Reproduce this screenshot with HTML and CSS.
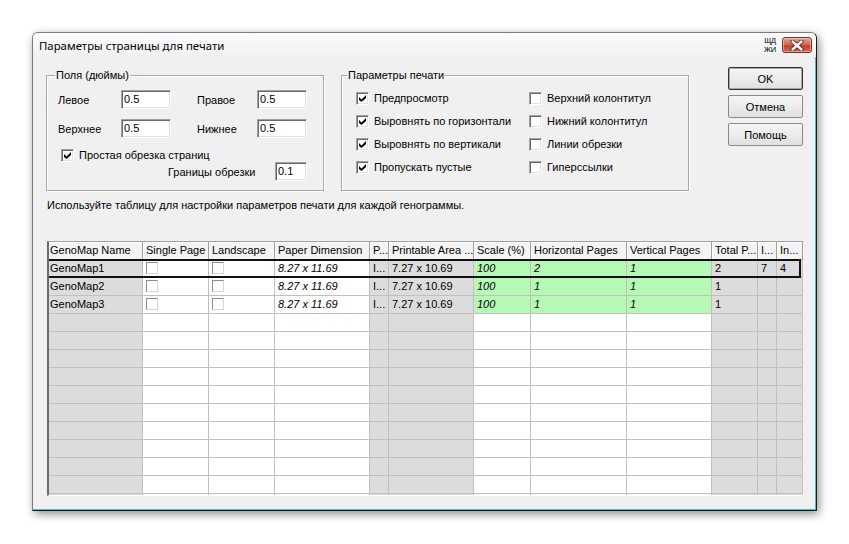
FILE: index.html
```html
<!DOCTYPE html>
<html lang="ru">
<head>
<meta charset="utf-8">
<title>Параметры страницы для печати</title>
<link rel="stylesheet" href="styles.css">
</head>
<body>
<div class="window">
  <div class="titlebar">
    <span class="title">Параметры страницы для печати</span>
    <span class="lang"><span>ЩД</span><span>ЖИ</span></span>
    <span class="close">
      <svg width="14" height="11" viewBox="0 0 14 11"><path d="M2.5 1.5 L11.5 9.5 M11.5 1.5 L2.5 9.5" stroke="#5b1d12" stroke-width="4.2" stroke-linecap="round"/><path d="M2.5 1.5 L11.5 9.5 M11.5 1.5 L2.5 9.5" stroke="#fff" stroke-width="2.4" stroke-linecap="round"/></svg>
    </span>
  </div>
  <div class="client">
    <div class="top">
      <div class="group margins">
        <span class="legend">Поля (дюймы)</span>
        <div class="mgrid">
          <span>Левое</span><span class="input">0.5</span><span></span><span>Правое</span><span class="input">0.5</span>
          <span>Верхнее</span><span class="input">0.5</span><span></span><span>Нижнее</span><span class="input">0.5</span>
        </div>
        <div class="check simple"><span class="cb"><svg width="7" height="7" viewBox="0 0 7 7"><polygon points="0,2 2.5,4.5 7,0 7,3 2.5,7 0,5"/></svg></span>Простая обрезка страниц</div>
        <div class="trim"><span>Границы обрезки</span><span class="input small">0.1</span></div>
      </div>
      <div class="group options">
        <span class="legend">Параметры печати</span>
        <div class="ogrid">
          <div class="check"><span class="cb"><svg width="7" height="7" viewBox="0 0 7 7"><polygon points="0,2 2.5,4.5 7,0 7,3 2.5,7 0,5"/></svg></span>Предпросмотр</div>
          <div class="check"><span class="cb"></span>Верхний колонтитул</div>
          <div class="check"><span class="cb"><svg width="7" height="7" viewBox="0 0 7 7"><polygon points="0,2 2.5,4.5 7,0 7,3 2.5,7 0,5"/></svg></span>Выровнять по горизонтали</div>
          <div class="check"><span class="cb"></span>Нижний колонтитул</div>
          <div class="check"><span class="cb"><svg width="7" height="7" viewBox="0 0 7 7"><polygon points="0,2 2.5,4.5 7,0 7,3 2.5,7 0,5"/></svg></span>Выровнять по вертикали</div>
          <div class="check"><span class="cb"></span>Линии обрезки</div>
          <div class="check"><span class="cb"><svg width="7" height="7" viewBox="0 0 7 7"><polygon points="0,2 2.5,4.5 7,0 7,3 2.5,7 0,5"/></svg></span>Пропускать пустые</div>
          <div class="check"><span class="cb"></span>Гиперссылки</div>
        </div>
      </div>
      <div class="buttons">
        <span class="btn default">OK</span>
        <span class="btn">Отмена</span>
        <span class="btn">Помощь</span>
      </div>
    </div>
    <p class="hint">Используйте таблицу для настройки параметров печати для каждой генограммы.</p>
    <div class="grid">
      <div class="row hdr">
        <span class="cell w0">GenoMap Name</span><span class="cell w1">Single Page</span><span class="cell w2">Landscape</span><span class="cell w3">Paper Dimension</span><span class="cell w4">P...</span><span class="cell w5">Printable Area ...</span><span class="cell w6">Scale (%)</span><span class="cell w7">Horizontal Pages</span><span class="cell w8">Vertical Pages</span><span class="cell w9">Total P...</span><span class="cell w10">I...</span><span class="cell w11">In...</span>
      </div>
      <div class="row current">
        <span class="cell w0 g">GenoMap1</span><span class="cell w1"><span class="tcb"></span></span><span class="cell w2"><span class="tcb"></span></span><span class="cell w3 it">8.27 x 11.69</span><span class="cell w4 g">I...</span><span class="cell w5 g">7.27 x 10.69</span><span class="cell w6 gr it">100</span><span class="cell w7 gr it">2</span><span class="cell w8 gr it">1</span><span class="cell w9 g">2</span><span class="cell w10 g">7</span><span class="cell w11 g">4</span>
      </div>
      <div class="row">
        <span class="cell w0 g">GenoMap2</span><span class="cell w1"><span class="tcb"></span></span><span class="cell w2"><span class="tcb"></span></span><span class="cell w3 it">8.27 x 11.69</span><span class="cell w4 g">I...</span><span class="cell w5 g">7.27 x 10.69</span><span class="cell w6 gr it">100</span><span class="cell w7 gr it">1</span><span class="cell w8 gr it">1</span><span class="cell w9 g">1</span><span class="cell w10 g"></span><span class="cell w11 g"></span>
      </div>
      <div class="row">
        <span class="cell w0 g">GenoMap3</span><span class="cell w1"><span class="tcb"></span></span><span class="cell w2"><span class="tcb"></span></span><span class="cell w3 it">8.27 x 11.69</span><span class="cell w4 g">I...</span><span class="cell w5 g">7.27 x 10.69</span><span class="cell w6 gr it">100</span><span class="cell w7 gr it">1</span><span class="cell w8 gr it">1</span><span class="cell w9 g">1</span><span class="cell w10 g"></span><span class="cell w11 g"></span>
      </div>
      <div class="row empty"><span class="cell w0 g"></span><span class="cell w1"></span><span class="cell w2"></span><span class="cell w3"></span><span class="cell w4 g"></span><span class="cell w5 g"></span><span class="cell w6"></span><span class="cell w7"></span><span class="cell w8"></span><span class="cell w9 g"></span><span class="cell w10 g"></span><span class="cell w11 g"></span></div>
      <div class="row empty"><span class="cell w0 g"></span><span class="cell w1"></span><span class="cell w2"></span><span class="cell w3"></span><span class="cell w4 g"></span><span class="cell w5 g"></span><span class="cell w6"></span><span class="cell w7"></span><span class="cell w8"></span><span class="cell w9 g"></span><span class="cell w10 g"></span><span class="cell w11 g"></span></div>
      <div class="row empty"><span class="cell w0 g"></span><span class="cell w1"></span><span class="cell w2"></span><span class="cell w3"></span><span class="cell w4 g"></span><span class="cell w5 g"></span><span class="cell w6"></span><span class="cell w7"></span><span class="cell w8"></span><span class="cell w9 g"></span><span class="cell w10 g"></span><span class="cell w11 g"></span></div>
      <div class="row empty"><span class="cell w0 g"></span><span class="cell w1"></span><span class="cell w2"></span><span class="cell w3"></span><span class="cell w4 g"></span><span class="cell w5 g"></span><span class="cell w6"></span><span class="cell w7"></span><span class="cell w8"></span><span class="cell w9 g"></span><span class="cell w10 g"></span><span class="cell w11 g"></span></div>
      <div class="row empty"><span class="cell w0 g"></span><span class="cell w1"></span><span class="cell w2"></span><span class="cell w3"></span><span class="cell w4 g"></span><span class="cell w5 g"></span><span class="cell w6"></span><span class="cell w7"></span><span class="cell w8"></span><span class="cell w9 g"></span><span class="cell w10 g"></span><span class="cell w11 g"></span></div>
      <div class="row empty"><span class="cell w0 g"></span><span class="cell w1"></span><span class="cell w2"></span><span class="cell w3"></span><span class="cell w4 g"></span><span class="cell w5 g"></span><span class="cell w6"></span><span class="cell w7"></span><span class="cell w8"></span><span class="cell w9 g"></span><span class="cell w10 g"></span><span class="cell w11 g"></span></div>
      <div class="row empty"><span class="cell w0 g"></span><span class="cell w1"></span><span class="cell w2"></span><span class="cell w3"></span><span class="cell w4 g"></span><span class="cell w5 g"></span><span class="cell w6"></span><span class="cell w7"></span><span class="cell w8"></span><span class="cell w9 g"></span><span class="cell w10 g"></span><span class="cell w11 g"></span></div>
      <div class="row empty"><span class="cell w0 g"></span><span class="cell w1"></span><span class="cell w2"></span><span class="cell w3"></span><span class="cell w4 g"></span><span class="cell w5 g"></span><span class="cell w6"></span><span class="cell w7"></span><span class="cell w8"></span><span class="cell w9 g"></span><span class="cell w10 g"></span><span class="cell w11 g"></span></div>
      <div class="row empty"><span class="cell w0 g"></span><span class="cell w1"></span><span class="cell w2"></span><span class="cell w3"></span><span class="cell w4 g"></span><span class="cell w5 g"></span><span class="cell w6"></span><span class="cell w7"></span><span class="cell w8"></span><span class="cell w9 g"></span><span class="cell w10 g"></span><span class="cell w11 g"></span></div>
      <div class="row empty"><span class="cell w0 g"></span><span class="cell w1"></span><span class="cell w2"></span><span class="cell w3"></span><span class="cell w4 g"></span><span class="cell w5 g"></span><span class="cell w6"></span><span class="cell w7"></span><span class="cell w8"></span><span class="cell w9 g"></span><span class="cell w10 g"></span><span class="cell w11 g"></span></div>
      <div class="row empty"><span class="cell w0 g"></span><span class="cell w1"></span><span class="cell w2"></span><span class="cell w3"></span><span class="cell w4 g"></span><span class="cell w5 g"></span><span class="cell w6"></span><span class="cell w7"></span><span class="cell w8"></span><span class="cell w9 g"></span><span class="cell w10 g"></span><span class="cell w11 g"></span></div>
    </div>
  </div>
</div>
</body>
</html>
```
FILE: styles.css
```css
* { box-sizing: border-box; }
html, body { margin: 0; padding: 0; }
body {
  width: 849px;
  height: 544px;
  overflow: hidden;
  background: #fff;
  font-family: "Liberation Sans", Arial, sans-serif;
  font-size: 11px;
  color: #000;
}

.window {
  margin: 32px 0 0 32px;
  width: 785px;
  height: 479px;
  display: flex;
  flex-direction: column;
  background: #f0f0f0;
  border: 1px solid;
  border-color: #7b7b7b #1b1b1b #1b1b1b #7b7b7b;
  border-radius: 6px 6px 0 0;
  box-shadow: inset -1px -1px 0 #45b8e3, 2px 3px 10px rgba(0, 0, 0, 0.45);
}

.titlebar {
  height: 24px;
  flex: none;
  display: flex;
  align-items: center;
  padding: 0 4px 0 6px;
  background: linear-gradient(#fdfdfd, #eef0f3);
  border-radius: 5px 5px 0 0;
}
.title {
  flex: 1;
  font-family: "Noto Sans", sans-serif;
  font-size: 11.4px;
  color: #000;
}
.lang {
  width: 16px;
  height: 18px;
  display: flex;
  flex-direction: column;
  align-items: center;
  font-size: 7.5px;
  line-height: 9px;
  letter-spacing: -0.2px;
  margin-right: 4px;
}
.close {
  width: 30px;
  height: 16px;
  display: flex;
  align-items: center;
  justify-content: center;
  border: 1px solid #7a3326;
  border-radius: 3px;
  background: linear-gradient(#e6a295, #d16c58 45%, #c0432c 55%, #d3664d);
  box-shadow: inset 0 0 0 1px rgba(255, 220, 210, 0.5);
}

.client {
  flex: 1;
  display: flex;
  flex-direction: column;
  padding: 10px 13px 14px 13px;
}

.top {
  display: flex;
  align-items: flex-start;
}

.group {
  position: relative;
  margin-top: 8px;
  height: 116px;
  border: 1px solid #a8a8a8;
  box-shadow: inset 1px 1px 0 #fff, 1px 1px 0 #fff;
}
.margins { width: 278px; margin-right: 17px; }
.options { width: 348px; }
.legend {
  position: absolute;
  top: -7px;
  left: 8px;
  padding: 0 1px;
  line-height: 13px;
  background: #f0f0f0;
}
.options .legend { left: 5px; }

.mgrid {
  display: grid;
  grid-template-columns: 63px 50px 26px 60px 50px;
  grid-auto-rows: 19px;
  row-gap: 10px;
  align-items: center;
  margin: 14px 0 0 11px;
}

.input {
  display: block;
  height: 19px;
  background: #fff;
  border: 1px solid;
  border-color: #a0a0a0 #fff #fff #a0a0a0;
  box-shadow: inset 1px 1px 0 #696969, inset -1px -1px 0 #e3e3e3;
  padding-left: 2px;
  line-height: 17px;
}
.input.small { width: 32px; }

.check {
  display: flex;
  align-items: center;
  gap: 5px;
  height: 13px;
  line-height: 13px;
  white-space: nowrap;
}
.check.simple {
  margin: 11px 0 0 14px;
}
.cb {
  width: 13px;
  height: 13px;
  flex: none;
  display: flex;
  align-items: center;
  justify-content: center;
  background: #fff;
  border: 1px solid;
  border-color: #a0a0a0 #fff #fff #a0a0a0;
  box-shadow: inset 1px 1px 0 #696969, inset -1px -1px 0 #e3e3e3;
}
.cb svg { display: block; fill: #000; }

.trim {
  display: flex;
  align-items: center;
  height: 19px;
  padding: 0 16px 0 121px;
}
.trim .input { margin-left: auto; }

.ogrid {
  display: grid;
  grid-template-columns: 173px 1fr;
  grid-auto-rows: 13px;
  row-gap: 10px;
  margin: 16px 0 0 14px;
}

.buttons {
  margin-left: auto;
  display: flex;
  flex-direction: column;
  gap: 5px;
}
.btn {
  width: 75px;
  height: 23px;
  display: flex;
  align-items: center;
  justify-content: center;
  border: 1px solid #8a8a8a;
  border-radius: 2px;
  background: linear-gradient(#f6f6f6, #ececec 50%, #e0e0e0);
}
.btn.default {
  border-color: #333;
  box-shadow: inset 0 0 0 1px #a8a8a8;
}

.hint {
  margin: 8px 0 0 1px;
  line-height: 13px;
}

.grid {
  margin: 29px 0 0 1px;
  width: 757px;
  height: 255px;
  overflow: hidden;
  background: #fff;
  border-left: 2px solid #6b6b6b;
  border-top: 1px solid #a0a0a0;
  border-right: 1px solid #f4f4f4;
  border-bottom: 1px solid #fff;
}
.row {
  display: flex;
  height: 18px;
  position: relative;
}
.cell {
  flex: none;
  height: 18px;
  border-right: 1px solid #c0c0c0;
  border-bottom: 1px solid #c0c0c0;
  padding-left: 3px;
  line-height: 17px;
  white-space: nowrap;
  overflow: hidden;
  background: #fff;
}
.hdr .cell {
  background: #f4f4f4;
  border-color: #a0a0a0;
  box-shadow: inset 1px 1px 0 #fff;
}
.row .w0 { padding-left: 1px; }
.w0 { width: 94px; }
.w1 { width: 66px; }
.w2 { width: 66px; }
.w3 { width: 95px; }
.w4 { width: 19px; }
.w5 { width: 85px; }
.w6 { width: 57px; }
.w7 { width: 96px; }
.w8 { width: 85px; }
.w9 { width: 46px; }
.w10 { width: 19px; }
.w11 { width: 26px; }
.cell.g { background: #dcdcdc; }
.cell.gr { background: #b6f8b6; }
.it { font-style: italic; }

.tcb {
  display: block;
  width: 12px;
  height: 12px;
  margin-top: 2px;
  background: #fff;
  border: 1px solid;
  border-color: #8c8c8c #d6d6d6 #d6d6d6 #8c8c8c;
}

.current::after {
  content: "";
  position: absolute;
  top: -1px;
  left: -2px;
  right: 2px;
  bottom: 0;
  border: 2px solid #111;
}
```
